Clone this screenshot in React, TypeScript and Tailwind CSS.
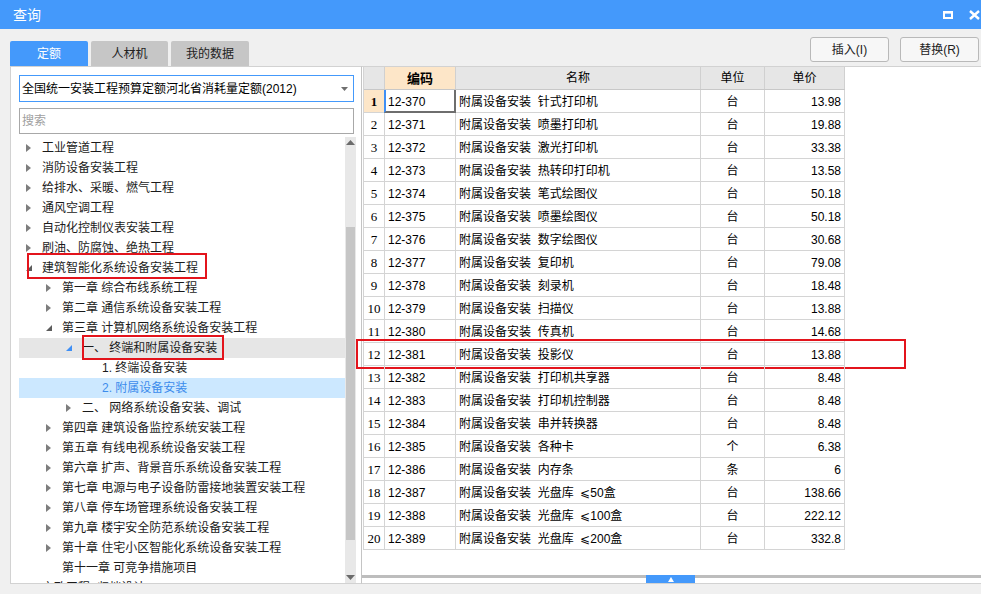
import React from 'react';

// Tree rows of the quota catalogue
type TreeRow = {
  text: string;
  level: 0 | 1 | 2 | 3;
  arrow?: 'closed' | 'open' | 'openBlue';
  state?: 'hover' | 'selected';
  mark?: 'a' | 'b';
};

const TREE: TreeRow[] = [
  { text: '工业管道工程', level: 0, arrow: 'closed' },
  { text: '消防设备安装工程', level: 0, arrow: 'closed' },
  { text: '给排水、采暖、燃气工程', level: 0, arrow: 'closed' },
  { text: '通风空调工程', level: 0, arrow: 'closed' },
  { text: '自动化控制仪表安装工程', level: 0, arrow: 'closed' },
  { text: '刷油、防腐蚀、绝热工程', level: 0, arrow: 'closed' },
  { text: '建筑智能化系统设备安装工程', level: 0, arrow: 'open', mark: 'a' },
  { text: '第一章 综合布线系统工程', level: 1, arrow: 'closed' },
  { text: '第二章 通信系统设备安装工程', level: 1, arrow: 'closed' },
  { text: '第三章 计算机网络系统设备安装工程', level: 1, arrow: 'open' },
  { text: '一、 终端和附属设备安装', level: 2, arrow: 'openBlue', state: 'hover', mark: 'b' },
  { text: '1. 终端设备安装', level: 3 },
  { text: '2. 附属设备安装', level: 3, state: 'selected' },
  { text: '二、 网络系统设备安装、调试', level: 2, arrow: 'closed' },
  { text: '第四章 建筑设备监控系统安装工程', level: 1, arrow: 'closed' },
  { text: '第五章 有线电视系统设备安装工程', level: 1, arrow: 'closed' },
  { text: '第六章 扩声、背景音乐系统设备安装工程', level: 1, arrow: 'closed' },
  { text: '第七章 电源与电子设备防雷接地装置安装工程', level: 1, arrow: 'closed' },
  { text: '第八章 停车场管理系统设备安装工程', level: 1, arrow: 'closed' },
  { text: '第九章 楼宇安全防范系统设备安装工程', level: 1, arrow: 'closed' },
  { text: '第十章 住宅小区智能化系统设备安装工程', level: 1, arrow: 'closed' },
  { text: '第十一章 可竞争措施项目', level: 1 },
  { text: '市政工程 (归档设计)', level: 0, arrow: 'closed' },
];

const INDENT = ['pl-[7px]', 'pl-[27px]', 'pl-[47px]', 'pl-[67px]'];

// Table rows: code, item, unit, price
const ROWS: [string, string, string, string][] = [
  ['12-370', '针式打印机', '台', '13.98'],
  ['12-371', '喷墨打印机', '台', '19.88'],
  ['12-372', '激光打印机', '台', '33.38'],
  ['12-373', '热转印打印机', '台', '13.58'],
  ['12-374', '笔式绘图仪', '台', '50.18'],
  ['12-375', '喷墨绘图仪', '台', '50.18'],
  ['12-376', '数字绘图仪', '台', '30.68'],
  ['12-377', '复印机', '台', '79.08'],
  ['12-378', '刻录机', '台', '18.48'],
  ['12-379', '扫描仪', '台', '13.88'],
  ['12-380', '传真机', '台', '14.68'],
  ['12-381', '投影仪', '台', '13.88'],
  ['12-382', '打印机共享器', '台', '8.48'],
  ['12-383', '打印机控制器', '台', '8.48'],
  ['12-384', '串并转换器', '台', '8.48'],
  ['12-385', '各种卡', '个', '6.38'],
  ['12-386', '内存条', '条', '6'],
  ['12-387', '光盘库  ⩽50盒', '台', '138.66'],
  ['12-388', '光盘库  ⩽100盒', '台', '222.12'],
  ['12-389', '光盘库  ⩽200盒', '台', '332.8'],
];

const Arrow: React.FC<{ kind?: TreeRow['arrow'] }> = ({ kind }) => {
  if (!kind) return <span className="w-[16px] shrink-0" />;
  if (kind === 'closed') {
    return (
      <span className="w-[16px] shrink-0 flex items-center">
        <svg width="5" height="8" viewBox="0 0 5 8">
          <path d="M0 0 L5 4 L0 8 Z" fill="#7d7d7d" />
        </svg>
      </span>
    );
  }
  return (
    <span className="w-[16px] shrink-0 flex items-center">
      <svg width="6" height="6" viewBox="0 0 6 6">
        <path d="M6 0 L6 6 L0 6 Z" fill={kind === 'openBlue' ? '#3f8ff5' : '#5c5c5c'} />
      </svg>
    </span>
  );
};

const TitleBar: React.FC = () => (
  <div className="h-[29px] shrink-0 bg-[#4499fb] flex items-center pl-[13px] pr-[1px]">
    <span className="text-white text-[14px] leading-none">查询</span>
    <div className="ml-auto flex items-center gap-[16px]">
      <svg width="10" height="8" viewBox="0 0 10 8">
        <rect x="1" y="1.25" width="8" height="5.75" fill="none" stroke="#fff" strokeWidth="2" />
        <rect x="0" y="0" width="10" height="2.5" fill="#fff" />
      </svg>
      <svg width="11" height="10" viewBox="0 0 11 10">
        <path d="M1 1 L10 9 M10 1 L1 9" stroke="#fff" strokeWidth="2.4" />
      </svg>
    </div>
  </div>
);

const LeftPanel: React.FC = () => (
  <div className="w-[351px] h-[518px] bg-white border border-r-0 border-[#d2d2d2] flex flex-col pl-[8px] pt-[8px]">
    {/* quota library select */}
    <div className="w-[335px] h-[27px] border border-[#4499fb] flex items-center pl-[2px] pr-[5px] shrink-0">
      <span className="text-[12px] text-black leading-none">全国统一安装工程预算定额河北省消耗量定额(2012)</span>
      <svg className="ml-auto" width="7" height="4" viewBox="0 0 7 4">
        <path d="M0 0 L7 0 L3.5 4 Z" fill="#6f6f6f" />
      </svg>
    </div>
    {/* search */}
    <div className="w-[335px] h-[26px] mt-[6px] border border-[#a8a8a8] flex items-center pl-[2px] shrink-0">
      <span className="text-[12px] text-[#a0a0a0] leading-none">搜索</span>
    </div>
    <div className="flex flex-1 mt-[3px] min-h-0">
      <div className="w-[326px] overflow-hidden pt-[1px]">
        {TREE.map((r, i) => (
          <div
            key={i}
            className={`relative h-[20px] flex items-center ${INDENT[r.level]} ${
              r.state === 'hover' ? 'bg-[#e6e6e6]' : r.state === 'selected' ? 'bg-[#cce8ff]' : ''
            }`}
          >
            <Arrow kind={r.arrow} />
            <span
              className={`text-[12px] leading-none whitespace-nowrap ${
                r.state === 'selected' ? 'text-[#3d8cec]' : 'text-[#1b1b1b]'
              }`}
            >
              {r.text}
            </span>
            {r.mark === 'a' && (
              <span className="absolute left-[8px] top-[-5px] w-[180px] h-[26px] border-2 border-[#e3141c]" />
            )}
            {r.mark === 'b' && (
              <span className="absolute left-[63px] top-[-3px] w-[142px] h-[25px] border-2 border-[#e3141c]" />
            )}
          </div>
        ))}
      </div>
      {/* scrollbar */}
      <div className="w-[11px] bg-[#e8e8e8] flex flex-col items-center">
        <svg className="mt-[3px]" width="9" height="5" viewBox="0 0 9 5">
          <path d="M0 5 L4.5 0 L9 5 Z" fill="#6b6b6b" />
        </svg>
        <div className="w-[9px] h-[313px] mt-[82px] bg-[#c6c6c6]" />
        <svg className="mt-auto mb-[3px]" width="9" height="5" viewBox="0 0 9 5">
          <path d="M0 0 L9 0 L4.5 5 Z" fill="#6b6b6b" />
        </svg>
      </div>
      <div className="w-[5px]" />
    </div>
  </div>
);

const COLS = ['w-[21px]', 'w-[71px]', 'w-[245px]', 'w-[64px]', 'w-[80px]'];

const RightPanel: React.FC = () => (
  <div className="w-[620px] h-[518px] bg-white border border-r-0 border-[#d2d2d2] border-l-[#c4c4c4] flex flex-col">
    <div className="flex-1 pl-[1px]">
      <div className="w-[482px] border-l border-[#d4d4d4]">
        {/* header */}
        <div className="flex h-[23px] border-b border-[#c8c8c8] text-[12px] leading-none text-black">
          <div className={`${COLS[0]} bg-[#e6e6e6] border-r border-[#d0d0d0]`} />
          <div className={`${COLS[1]} bg-[#fde6c8] border-r border-[#d0d0d0] flex items-center justify-center font-bold text-[13px]`}>编码</div>
          <div className={`${COLS[2]} bg-[#e6e6e6] border-r border-[#d0d0d0] flex items-center justify-center`}>名称</div>
          <div className={`${COLS[3]} bg-[#e6e6e6] border-r border-[#d0d0d0] flex items-center justify-center`}>单位</div>
          <div className={`${COLS[4]} bg-[#e6e6e6] border-r border-[#d0d0d0] flex items-center justify-center`}>单价</div>
        </div>
        {ROWS.map((r, i) => (
          <div key={i} className="relative flex h-[23px] border-b border-[#d4d4d4] text-[12px] leading-none text-black">
            <div
              className={`${COLS[0]} border-r border-[#d4d4d4] flex items-center justify-center pt-[1px] font-['Liberation_Serif',serif] text-[13px] ${
                i === 0 ? 'bg-[#fde6c8] font-bold' : ''
              }`}
            >
              {i + 1}
            </div>
            <div className={`${COLS[1]} relative border-r border-[#d4d4d4] flex items-center pl-[3px] pt-[1px]`}>
              {r[0]}
              {i === 0 && (
                <span className="absolute left-[-1px] top-0 right-[-1px] bottom-[-1px] border-l-2 border-l-[#3f8ff5] border-r-2 border-b-2 border-r-[#6e6e6e] border-b-[#6e6e6e]" />
              )}
            </div>
            <div className={`${COLS[2]} border-r border-[#d4d4d4] flex items-center pl-[3px] pt-[1px] whitespace-pre`}>
              {'附属设备安装  ' + r[1]}
            </div>
            <div className={`${COLS[3]} border-r border-[#d4d4d4] flex items-center justify-center pt-[1px]`}>{r[2]}</div>
            <div className={`${COLS[4]} border-r border-[#d4d4d4] flex items-center justify-end pr-[3px] pt-[1px]`}>{r[3]}</div>
            {i === 11 && (
              <span className="absolute left-[-8px] top-[-4px] w-[550px] h-[30px] border-2 border-[#e3141c]" />
            )}
          </div>
        ))}
      </div>
    </div>
    {/* splitter */}
    <div className="relative h-[8px] shrink-0">
      <div className="h-[3px] bg-[#bdbdbd]" />
      <div className="absolute left-[284px] top-0 w-[49px] h-[8px] bg-[#4499fb] flex items-end justify-center pb-[1px]">
        <svg width="6" height="5" viewBox="0 0 6 5">
          <path d="M0 5 L3 0 L6 5 Z" fill="#fff" />
        </svg>
      </div>
    </div>
  </div>
);

export default function App() {
  return (
    <div className="w-[981px] h-[594px] overflow-hidden bg-[#f0f0f0] flex flex-col font-['Liberation_Sans','Noto_Sans_CJK_SC',sans-serif]">
      <TitleBar />
      {/* tabs and action buttons */}
      <div className="h-[37px] shrink-0 flex pl-[10px] pr-[2px]">
        <div className="flex items-end gap-[3px]">
          <div className="w-[78px] h-[25px] rounded-t-[2px] bg-[#4499fb] text-white text-[12px] leading-none flex items-center justify-center">定额</div>
          <div className="w-[77px] h-[25px] rounded-t-[2px] bg-[#c6c6c6] text-[#222] text-[12px] leading-none flex items-center justify-center">人材机</div>
          <div className="w-[78px] h-[25px] rounded-t-[2px] bg-[#c6c6c6] text-[#222] text-[12px] leading-none flex items-center justify-center">我的数据</div>
        </div>
        <div className="ml-auto mt-[8px] flex gap-[11px] items-start">
          <button className="w-[79px] h-[25px] rounded-[3px] border border-[#b9b9b9] bg-[#f7f7f7] text-[12px] leading-none text-[#222]">插入(I)</button>
          <button className="w-[79px] h-[25px] rounded-[3px] border border-[#b9b9b9] bg-[#f7f7f7] text-[12px] leading-none text-[#222]">替换(R)</button>
        </div>
      </div>
      <div className="flex pl-[10px]">
        <LeftPanel />
        <RightPanel />
      </div>
    </div>
  );
}
